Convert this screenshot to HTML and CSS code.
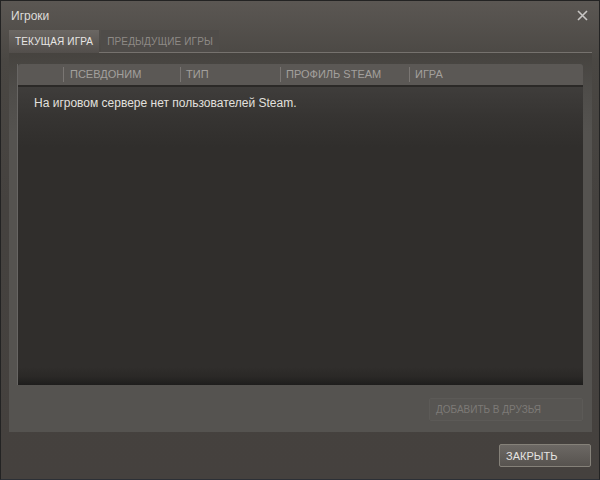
FILE: index.html
```html
<!DOCTYPE html>
<html lang="ru">
<head>
<meta charset="utf-8">
<title>Игроки</title>
<link rel="stylesheet" href="styles.css">
</head>
<body>
<div class="window">
  <div class="titlebar">
    <span class="title">Игроки</span>
    <svg class="close" width="11" height="11" viewBox="0 0 11 11"><path d="M1 1L10 10M10 1L1 10" stroke="#c8c6c4" stroke-width="1.6" fill="none"/></svg>
  </div>
  <div class="tabs">
    <div class="tab active">ТЕКУЩАЯ ИГРА</div>
    <div class="tab">ПРЕДЫДУЩИЕ ИГРЫ</div>
  </div>
  <div class="panel">
    <div class="list">
      <div class="list-head">
        <div class="col c0"></div>
        <div class="col c1">ПСЕВДОНИМ</div>
        <div class="col c2">ТИП</div>
        <div class="col c3">ПРОФИЛЬ STEAM</div>
        <div class="col c4">ИГРА</div>
      </div>
      <div class="list-body">
        <div class="empty">На игровом сервере нет пользователей Steam.</div>
      </div>
    </div>
    <div class="panel-actions">
      <div class="btn disabled">ДОБАВИТЬ В ДРУЗЬЯ</div>
    </div>
  </div>
  <div class="footer">
    <div class="btn primary">ЗАКРЫТЬ</div>
  </div>
</div>
</body>
</html>
```
FILE: styles.css
```css
html, body {
  margin: 0;
  padding: 0;
  background: #1f1f1f;
}
.window {
  width: 600px;
  height: 480px;
  box-sizing: border-box;
  border: 1px solid #232323;
  border-bottom-color: #2c3036;
  background: linear-gradient(#5b5753 0px, #4a4743 60px, #45423f 200px, #45413e 100%);
  display: flex;
  flex-direction: column;
  font-family: "Liberation Sans", Arial, sans-serif;
  color: #dcdcdc;
}
.titlebar {
  height: 29px;
  display: flex;
  align-items: center;
  justify-content: space-between;
  padding: 0 11px 0 10px;
  box-sizing: border-box;
}
.title {
  font-size: 12px;
  color: #dedcda;
  margin-top: 1px;
}
.tabs {
  display: flex;
  margin: 0 7px 0 8px;
  height: 23px;
  box-sizing: border-box;
  border-bottom: 1px solid #76726e;
  gap: 2px;
}
.tab {
  font-size: 10px;
  letter-spacing: 0.15px;
  padding: 0 6px;
  display: flex;
  align-items: center;
  height: 22px;
  color: #8e8a86;
  background: #4f4c49;
}
.tab.active {
  color: #e8e6e4;
  background: linear-gradient(#6b6763, #524e4b);
  height: 23px;
  margin-bottom: -1px;
}
.panel {
  margin: 0 7px 0 8px;
  height: 379px;
  box-sizing: border-box;
  padding: 11px 9px 11px 8px;
  background: linear-gradient(#46433f 0px, #4f4d4a 40px, #555350 80px, #555350 100%);
  display: flex;
  flex-direction: column;
}
.list {
  height: 321px;
  display: flex;
  flex-direction: column;
  border-left: 1px solid #686664;
  box-sizing: border-box;
}
.list-head {
  height: 21px;
  background: #5b5855;
  border-radius: 3px 3px 0 0;
  display: flex;
  align-items: center;
  font-size: 11px;
  color: #a3a09d;
  border-bottom: 2px solid #2b2927;
}
.col {
  height: 15px;
  line-height: 15px;
  padding-left: 5px;
  box-sizing: border-box;
}
.col + .col {
  border-left: 1px solid #7a7673;
}
.c0 { width: 45px; padding-left: 0; }
.c1 { width: 117px; padding-left: 6px; }
.c2 { width: 100px; }
.c3 { width: 129px; }
.c4 { flex: 1; }
.list-body {
  flex: 1;
  background: linear-gradient(#3f3d3b 0px, #363432 30px, #302e2c 60px, #302e2c 280px, #2a2826 290px, #1e1d1c 100%);
  padding: 9px 0 0 16px;
}
.empty {
  font-size: 12px;
  color: #e2e0de;
}
.panel-actions {
  display: flex;
  justify-content: flex-end;
  margin-top: 13px;
}
.btn {
  font-size: 10px;
  display: flex;
  align-items: center;
  box-sizing: border-box;
  height: 23px;
  padding-left: 6px;
  border-radius: 2px;
}
.btn.disabled {
  width: 154px;
  color: #7d7a77;
  border: 1px solid #5c5a57;
  background: #575552;
}
.footer {
  display: flex;
  justify-content: flex-end;
  padding: 12px 8px 0 0;
}
.btn.primary {
  width: 92px;
  font-size: 11px;
  color: #e6e4e2;
  border: 1px solid #858179;
  background: linear-gradient(#6c6864, #57534f);
}
```
